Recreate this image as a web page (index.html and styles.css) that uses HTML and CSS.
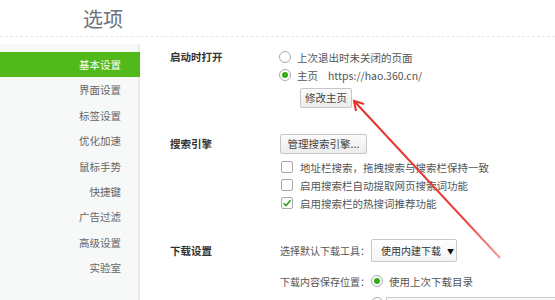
FILE: index.html
```html
<!DOCTYPE html>
<html lang="zh-CN">
<head>
<meta charset="utf-8">
<title>选项</title>
<link rel="stylesheet" href="styles.css">
</head>
<body>
<div class="page">
  <header class="header"><h1 class="title">选项</h1></header>
  <div class="main">
    <nav class="sidebar">
      <div class="nav-item active">基本设置</div>
      <div class="nav-item">界面设置</div>
      <div class="nav-item">标签设置</div>
      <div class="nav-item">优化加速</div>
      <div class="nav-item">鼠标手势</div>
      <div class="nav-item">快捷键</div>
      <div class="nav-item">广告过滤</div>
      <div class="nav-item">高级设置</div>
      <div class="nav-item">实验室</div>
    </nav>
    <section class="content">
      <div class="group g-startup">
        <div class="label">启动时打开</div>
        <div class="controls">
          <div class="row"><span class="radio"></span><span>上次退出时未关闭的页面</span></div>
          <div class="row"><span class="radio on"></span><span>主页</span><span class="url">https://hao.360.cn/</span></div>
          <div class="btn-row"><button class="btn btn-home">修改主页</button></div>
        </div>
      </div>
      <div class="group g-search">
        <div class="label label-btn">搜索引擎</div>
        <div class="controls">
          <div><button class="btn btn-engine">管理搜索引擎...</button></div>
          <div class="checks">
            <div class="row"><span class="check"></span><span>地址栏搜索，拖拽搜索与搜索栏保持一致</span></div>
            <div class="row"><span class="check"></span><span>启用搜索栏自动提取网页搜索词功能</span></div>
            <div class="row"><span class="check on"><svg viewBox="0 0 12 12" width="12" height="12"><path d="M2.6 6.2 L5 8.6 L9.6 3.2" fill="none" stroke="#2f9e1a" stroke-width="1.6"/></svg></span><span>启用搜索栏的热搜词推荐功能</span></div>
          </div>
        </div>
      </div>
      <div class="group g-download">
        <div class="label label-select">下载设置</div>
        <div class="controls">
          <div class="select-row">
            <span class="field-label">选择默认下载工具：</span>
            <span class="select">使用内建下载<span class="caret">▼</span></span>
          </div>
          <div class="row save-row">
            <span class="field-label">下载内容保存位置：</span>
            <span class="radio on"></span><span>使用上次下载目录</span>
          </div>
          <div class="row path-row">
            <span class="radio"></span><span class="path">D:\360安全浏览器下载</span>
          </div>
        </div>
      </div>
    </section>
  </div>
  <svg class="arrow" width="555" height="300" viewBox="0 0 555 300">
    <defs>
      <linearGradient id="fade" x1="354" y1="101" x2="500" y2="258" gradientUnits="userSpaceOnUse">
        <stop offset="0" stop-color="#e5312b"/>
        <stop offset="0.75" stop-color="#ea3a35"/>
        <stop offset="1" stop-color="#f39a96"/>
      </linearGradient>
    </defs>
    <line x1="355" y1="102" x2="500" y2="258" stroke="url(#fade)" stroke-width="2"/>
    <polyline points="364,104 354,101 356,111" fill="none" stroke="#e5312b" stroke-width="2" stroke-linejoin="miter"/>
  </svg>
</div>
</body>
</html>
```

FILE: styles.css
```css
* { box-sizing: border-box; }
html, body { margin: 0; padding: 0; }
body {
  font-family: "Noto Sans CJK SC", "Noto Sans", sans-serif;
  font-size: 10.5px;
  color: #555;
  background: #fff;
  width: 555px;
  height: 300px;
  overflow: hidden;
}
.page { position: relative; width: 555px; height: 300px; overflow: hidden; }

.header {
  height: 37px;
  border-bottom: 1px dashed #e2e8ec;
}
.title {
  margin: 0;
  padding: 2px 0 0 83px;
  font-size: 20px;
  font-weight: normal;
  line-height: 34px;
  color: #6a717b;
}

.main { display: flex; height: 263px; }

.sidebar {
  width: 140px;
  flex: none;
  margin-top: 7px;
  padding-top: 8px;
  background: #f7f8f8;
  border-right: 2px solid #e6e8ea;
}
.nav-item {
  height: 25.4px;
  line-height: 25.4px;
  text-align: right;
  padding-right: 17px;
  color: #666;
}
.nav-item.active {
  background: #52b91b;
  color: #fff;
  margin-right: -2px;
  padding-right: 19px;
}

.content { flex: 1; padding: 11px 0 0 30px; }

.group { display: grid; grid-template-columns: 110px 1fr; }
.label { font-weight: bold; color: #333; line-height: 18px; }
.label-btn { line-height: 20px; }
.label-select { line-height: 23px; }

.row { display: flex; align-items: center; height: 18px; white-space: nowrap; }

.radio {
  width: 12px; height: 12px; flex: none;
  border: 1px solid #a9a9a9;
  border-radius: 50%;
  background: #fff;
  margin: 0 6px 0 -1px;
  display: inline-flex; align-items: center; justify-content: center;
}
.radio.on::after {
  content: "";
  width: 6px; height: 6px;
  border-radius: 50%;
  background: #34ab17;
}
.url { margin-left: 10px; }

.btn {
  font: inherit;
  color: #444;
  height: 20px;
  padding: 0 8px;
  border: 1px solid #c6c6c6;
  border-radius: 2px;
  background: linear-gradient(#fbfbfb, #ececec);
  line-height: 18px;
  white-space: nowrap;
}
.btn-row { margin-top: 4px; padding-left: 20px; }
.btn-home { width: 52px; padding: 0; }

.g-search { margin-top: 26px; }
.btn-engine { width: 87px; padding: 0; }
.checks { margin-top: 4px; }
.check {
  width: 12px; height: 12px; flex: none;
  border: 1px solid #a9a9a9;
  border-radius: 2px;
  background: #fff;
  margin: 0 7px 0 1px;
  display: inline-flex;
}
.check svg { margin: -1px; }

.g-download { margin-top: 27px; }
.select-row { display: flex; align-items: center; height: 23px; white-space: nowrap; }
.field-label { width: 91px; flex: none; white-space: nowrap; font-size: 10px; }
.select {
  width: 86px; height: 23px; flex: none;
  border: 1px solid #c8c8c8;
  border-radius: 2px;
  background: linear-gradient(#fff, #f4f4f4);
  color: #333;
  display: inline-flex; align-items: center;
  padding-left: 9px;
  font-size: 10px;
  white-space: nowrap;
}
.caret { font-size: 7px; margin-left: 6px; color: #111; }
.save-row { margin-top: 10px; }
.save-row .radio { margin-left: 0; }
.path-row { margin-top: 2px; padding-left: 91px; align-items: flex-start; padding-top: 5px; height: 30px; }
.path-row .radio { margin-left: 0; }
.path {
  width: 200px; height: 20px;
  border: 1px solid #c8c8c8;
  background: #fafafa;
  padding-left: 4px;
  line-height: 18px;
  color: #777;
  margin-left: -3px;
}

.arrow { position: absolute; left: 0; top: 0; pointer-events: none; }
```
